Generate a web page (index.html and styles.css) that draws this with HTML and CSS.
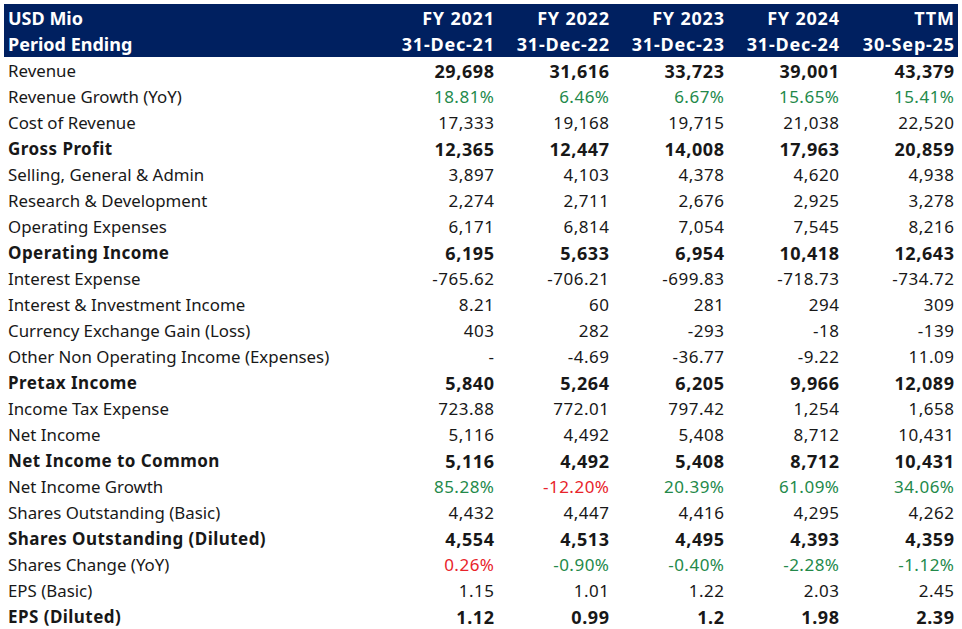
FILE: index.html
```html
<!DOCTYPE html>
<html>
<head>
<meta charset="utf-8">
<link rel="stylesheet" href="styles.css">
</head>
<body>
<div class="sheet">
<table class="fin">
<colgroup><col class="c-label"><col class="c-num"><col class="c-num"><col class="c-num"><col class="c-num"><col class="c-num"></colgroup>
<thead>
<tr class="h1"><th class="lbl">USD Mio</th><th>FY 2021</th><th>FY 2022</th><th>FY 2023</th><th>FY 2024</th><th>TTM</th></tr>
<tr class="h2"><th class="lbl">Period Ending</th><th>31-Dec-21</th><th>31-Dec-22</th><th>31-Dec-23</th><th>31-Dec-24</th><th>30-Sep-25</th></tr>
</thead>
<tbody>
<tr class="bn"><td class="lbl">Revenue</td><td>29,698</td><td>31,616</td><td>33,723</td><td>39,001</td><td>43,379</td></tr>
<tr><td class="lbl">Revenue Growth (YoY)</td><td class="g">18.81%</td><td class="g">6.46%</td><td class="g">6.67%</td><td class="g">15.65%</td><td class="g">15.41%</td></tr>
<tr><td class="lbl">Cost of Revenue</td><td>17,333</td><td>19,168</td><td>19,715</td><td>21,038</td><td>22,520</td></tr>
<tr class="b bn"><td class="lbl">Gross Profit</td><td>12,365</td><td>12,447</td><td>14,008</td><td>17,963</td><td>20,859</td></tr>
<tr><td class="lbl">Selling, General &amp; Admin</td><td>3,897</td><td>4,103</td><td>4,378</td><td>4,620</td><td>4,938</td></tr>
<tr><td class="lbl">Research &amp; Development</td><td>2,274</td><td>2,711</td><td>2,676</td><td>2,925</td><td>3,278</td></tr>
<tr><td class="lbl">Operating Expenses</td><td>6,171</td><td>6,814</td><td>7,054</td><td>7,545</td><td>8,216</td></tr>
<tr class="b bn"><td class="lbl">Operating Income</td><td>6,195</td><td>5,633</td><td>6,954</td><td>10,418</td><td>12,643</td></tr>
<tr><td class="lbl">Interest Expense</td><td>-765.62</td><td>-706.21</td><td>-699.83</td><td>-718.73</td><td>-734.72</td></tr>
<tr><td class="lbl">Interest &amp; Investment Income</td><td>8.21</td><td>60</td><td>281</td><td>294</td><td>309</td></tr>
<tr><td class="lbl">Currency Exchange Gain (Loss)</td><td>403</td><td>282</td><td>-293</td><td>-18</td><td>-139</td></tr>
<tr><td class="lbl">Other Non Operating Income (Expenses)</td><td>-</td><td>-4.69</td><td>-36.77</td><td>-9.22</td><td>11.09</td></tr>
<tr class="b bn"><td class="lbl">Pretax Income</td><td>5,840</td><td>5,264</td><td>6,205</td><td>9,966</td><td>12,089</td></tr>
<tr><td class="lbl">Income Tax Expense</td><td>723.88</td><td>772.01</td><td>797.42</td><td>1,254</td><td>1,658</td></tr>
<tr><td class="lbl">Net Income</td><td>5,116</td><td>4,492</td><td>5,408</td><td>8,712</td><td>10,431</td></tr>
<tr class="b bn"><td class="lbl">Net Income to Common</td><td>5,116</td><td>4,492</td><td>5,408</td><td>8,712</td><td>10,431</td></tr>
<tr><td class="lbl">Net Income Growth</td><td class="g">85.28%</td><td class="r">-12.20%</td><td class="g">20.39%</td><td class="g">61.09%</td><td class="g">34.06%</td></tr>
<tr><td class="lbl">Shares Outstanding (Basic)</td><td>4,432</td><td>4,447</td><td>4,416</td><td>4,295</td><td>4,262</td></tr>
<tr class="b bn"><td class="lbl">Shares Outstanding (Diluted)</td><td>4,554</td><td>4,513</td><td>4,495</td><td>4,393</td><td>4,359</td></tr>
<tr><td class="lbl">Shares Change (YoY)</td><td class="r">0.26%</td><td class="g">-0.90%</td><td class="g">-0.40%</td><td class="g">-2.28%</td><td class="g">-1.12%</td></tr>
<tr><td class="lbl">EPS (Basic)</td><td>1.15</td><td>1.01</td><td>1.22</td><td>2.03</td><td>2.45</td></tr>
<tr class="b bn"><td class="lbl">EPS (Diluted)</td><td>1.12</td><td>0.99</td><td>1.2</td><td>1.98</td><td>2.39</td></tr>
</tbody>
</table>
</div>
</body>
</html>
```
FILE: styles.css
```css
html, body {
  margin: 0;
  padding: 0;
  background: #ffffff;
}
.sheet {
  padding: 4px 4px 0 4px;
}
.fin {
  border-collapse: collapse;
  table-layout: fixed;
  width: 954px;
  font-family: "Noto Sans", "Liberation Sans", sans-serif;
  font-size: 17px;
  color: #181818;
}
.c-label { width: 379px; }
.c-num { width: 115px; }
.fin th, .fin td {
  box-sizing: border-box;
  padding: 0 3.5px 0 4px;
  text-align: right;
  white-space: nowrap;
  line-height: 20px;
  letter-spacing: 0.5px;
  vertical-align: middle;
}
.fin th.lbl, .fin td.lbl {
  text-align: left;
  letter-spacing: 0;
}
.fin td.lbl {
  font-size: 16.85px;
}
.fin thead tr {
  background: #002060;
  color: #ffffff;
}
.fin thead th {
  font-weight: 700;
  font-size: 18px;
  letter-spacing: 0.8px;
  padding-right: 3.2px;
}
.fin thead th.lbl {
  letter-spacing: 0;
}
.fin tr.h1 th { height: 27px; }
.fin tr.h2 th { height: 26px; }
.fin tbody td {
  height: 26px;
  padding-top: 2px;
}
.fin tr.bn td {
  font-weight: 700;
  font-size: 18px;
  letter-spacing: 0.6px;
  padding-right: 3.4px;
  padding-top: 2px;
}
.fin tr.bn td.lbl {
  font-weight: 400;
  font-size: 16.85px;
  letter-spacing: 0;
}
.fin tr.b td.lbl {
  font-weight: 700;
  font-size: 17px;
  letter-spacing: 0.45px;
}
.fin td.g { color: #23894a; }
.fin td.r { color: #e8232b; }
```
